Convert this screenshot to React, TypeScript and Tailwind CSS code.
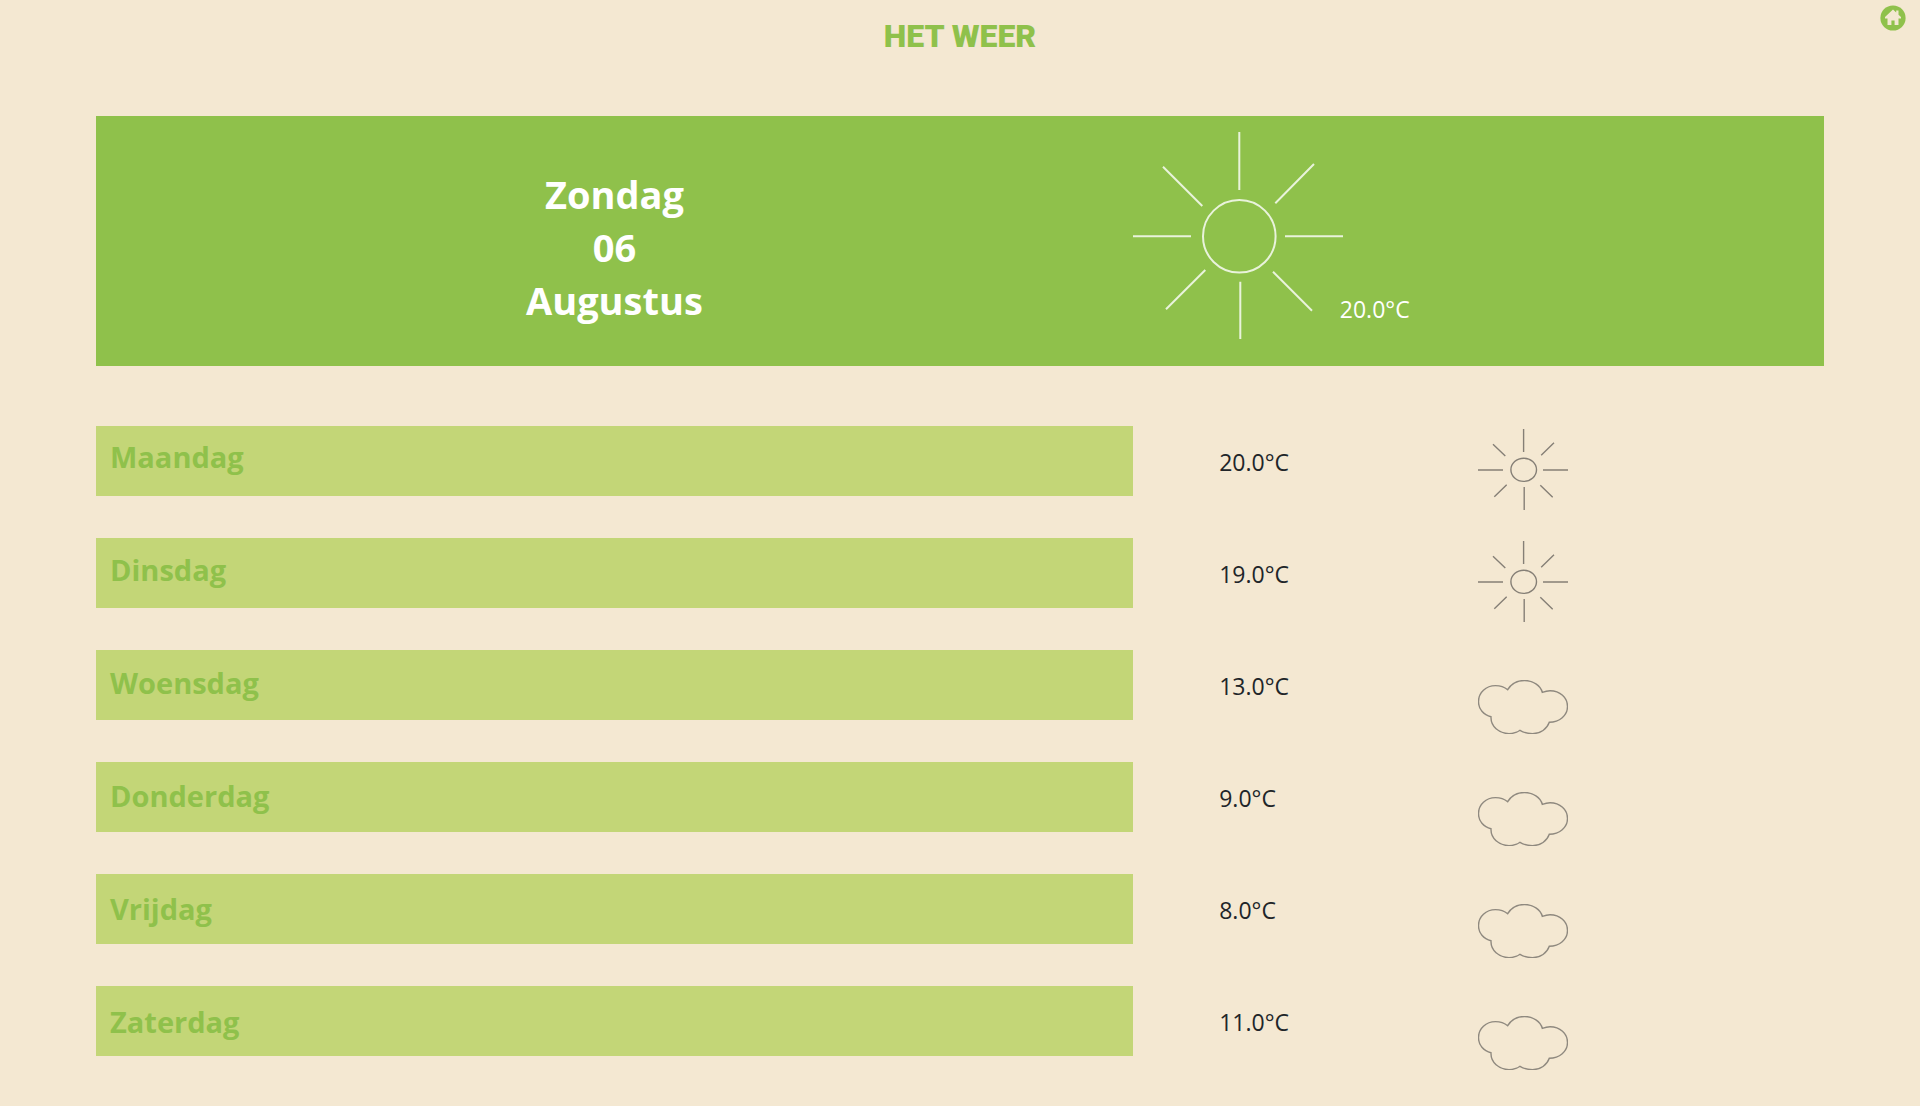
type Weather = "sun" | "cloud";

const forecast: { day: string; temp: string; weather: Weather }[] = [
  { day: "Maandag", temp: "20.0°C", weather: "sun" },
  { day: "Dinsdag", temp: "19.0°C", weather: "sun" },
  { day: "Woensdag", temp: "13.0°C", weather: "cloud" },
  { day: "Donderdag", temp: "9.0°C", weather: "cloud" },
  { day: "Vrijdag", temp: "8.0°C", weather: "cloud" },
  { day: "Zaterdag", temp: "11.0°C", weather: "cloud" },
];

function LargeSun() {
  return (
    <svg
      role="img"
      aria-label="Zonnig"
      viewBox="0 0 210 207"
      className="h-[207px] w-[210px] shrink-0 stroke-white/80"
      fill="none"
      strokeWidth="2"
    >
      <circle cx="106.3" cy="104.3" r="36.3" />
      <path d="M106.3 0V58M107.3 149.7V207M0 104.3H58M152 104.3H210M30 34.7L69.3 74M181 32L142.3 71.3M33 177.3L72.3 138M179 178.7L140 139.7" />
    </svg>
  );
}

function SmallSun() {
  return (
    <svg
      role="img"
      aria-label="Zonnig"
      viewBox="0 0 90 81"
      className="h-[81px] w-[90px] stroke-[#857f76]"
      fill="none"
      strokeWidth="1.4"
    >
      <ellipse cx="45.7" cy="40.8" rx="12.8" ry="11.6" />
      <path d="M45.6 0V23M46.2 58V81M0 41H25M65 41H90M15 15.3L27.3 27M76 13.8L63.2 26.2M16.3 67.8L28.7 55.7M62.3 56.2L74.7 68.2" />
    </svg>
  );
}

function Cloud() {
  return (
    <svg
      role="img"
      aria-label="Bewolkt"
      viewBox="0 0 90 54"
      className="h-[54px] w-[90px] stroke-[#8f897f]"
      fill="none"
      strokeWidth="1.4"
    >
      <path d="M29.7 9.7C33 4 39 .5 46.5 .5C55 .5 62.5 5.5 64.3 12.3C67 11.3 69.5 10.7 72 10.7C82 10.7 89.5 17.5 89.5 26.5C89.5 35.5 81.5 42.3 71.3 42.3C69 49 62.5 53.6 54.5 53.6C49.5 53.6 45 52.3 42 50.3C39 52.5 35 53.6 31 53.6C21 53.6 12.5 46.5 13 36.7C5.5 35 .5 29 .5 21.5C.5 12.5 8 5.6 17.5 5.6C22 5.6 26.5 7 29.7 9.7Z" />
    </svg>
  );
}

export default function App() {
  return (
    <div className="min-h-screen bg-[#f4e8d2] font-['Open_Sans','Noto_Sans',sans-serif] text-[#212529]">
      <header className="relative flex h-[116px] justify-center pt-4">
        <h1 className="font-['Roboto',sans-serif] text-[32px] leading-10 font-black text-[#8fc14b]">HET WEER</h1>
        <a href="#home" aria-label="Home" className="absolute top-[5px] right-[14px]">
          <svg viewBox="0 0 26 26" className="size-[26px]">
            <circle cx="13" cy="13" r="12.6" fill="#8fc14b" />
            <path d="M13 4.5L5 12V13.500H7.500V20H11.400V15.500H14.600V20H18.500V13.500H21V12L18.500 9.700V5.500H16.200V7.500Z" fill="#f4e8d2" />
          </svg>
        </a>
      </header>

      <main className="mx-[5%]">
        <section className="grid h-[250px] grid-cols-[3fr_2fr] bg-[#8fc14b] text-white">
          <h2 className="flex flex-col pt-[52px] text-center text-[38px] leading-[53px] font-bold">
            <span>Zondag</span>
            <span>06</span>
            <span>Augustus</span>
          </h2>
          <div className="flex items-end pb-[27px]">
            <LargeSun />
            <p className="-ml-[3px] pb-[14px] text-[23px] leading-8">20.0°C</p>
          </div>
        </section>

        <section className="mt-[60px] grid grid-cols-[3fr_1fr_1fr]">
          <div aria-hidden="true" className="col-start-1 row-start-1 flex flex-col gap-[42px]">
            {forecast.map(({ day }) => (
              <div key={day} className="h-[70px] bg-[#c3d677]" />
            ))}
          </div>
          <ul className="col-start-1 row-start-1 flex flex-col gap-[73px] pt-[11px] pl-[14px] text-[29px] leading-10 font-bold text-[#8fc14b]">
            {forecast.map(({ day }) => (
              <li key={day}>{day}</li>
            ))}
          </ul>
          <ul className="col-start-2 row-start-1 flex flex-col gap-20 pt-5 pl-[25%] text-[23px] leading-8">
            {forecast.map(({ day, temp }) => (
              <li key={day}>{temp}</li>
            ))}
          </ul>
          <ul className="col-start-3 row-start-1 flex flex-col gap-7">
            {forecast.map(({ day, weather }) => (
              <li key={day} className="flex h-[84px] items-end">
                {weather === "sun" ? <SmallSun /> : <Cloud />}
              </li>
            ))}
          </ul>
        </section>
      </main>
    </div>
  );
}
